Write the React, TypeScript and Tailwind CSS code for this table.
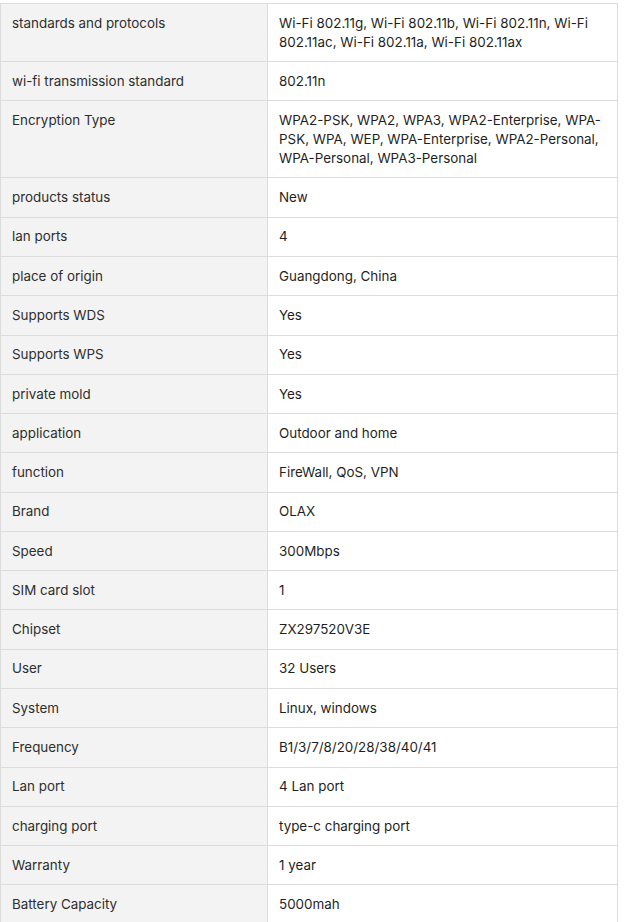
import React from "react";

const rows: [string, string][] = [
  ["standards and protocols", "Wi-Fi 802.11g, Wi-Fi 802.11b, Wi-Fi 802.11n, Wi-Fi 802.11ac, Wi-Fi 802.11a, Wi-Fi 802.11ax"],
  ["wi-fi transmission standard", "802.11n"],
  ["Encryption Type", "WPA2-PSK, WPA2, WPA3, WPA2-Enterprise, WPA-PSK, WPA, WEP, WPA-Enterprise, WPA2-Personal, WPA-Personal, WPA3-Personal"],
  ["products status", "New"],
  ["lan ports", "4"],
  ["place of origin", "Guangdong, China"],
  ["Supports WDS", "Yes"],
  ["Supports WPS", "Yes"],
  ["private mold", "Yes"],
  ["application", "Outdoor and home"],
  ["function", "FireWall, QoS, VPN"],
  ["Brand", "OLAX"],
  ["Speed", "300Mbps"],
  ["SIM card slot", "1"],
  ["Chipset", "ZX297520V3E"],
  ["User", "32 Users"],
  ["System", "Linux, windows"],
  ["Frequency", "B1/3/7/8/20/28/38/40/41"],
  ["Lan port", "4 Lan port"],
  ["charging port", "type-c charging port"],
  ["Warranty", "1 year"],
  ["Battery Capacity", "5000mah"],
];

export default function App() {
  return (
    <div className="bg-white w-[629px] h-[922px] overflow-hidden pt-[3px]" style={{ fontFamily: "Inter, 'Noto Sans', sans-serif" }}>
      <table className="w-[618px] border-collapse text-[13.4px] leading-[18.85px] table-fixed">
        <colgroup>
          <col className="w-[267px]" />
          <col />
        </colgroup>
        <tbody>
          {rows.map(([k, v]) => (
            <tr key={k}>
              <td className="border border-[#dcdcdc] bg-[#f3f3f3] text-[#2e2e2e] align-top pl-[11px] pr-[11px] py-[9.72px]">{k}</td>
              <td className="border border-[#dcdcdc] bg-white text-[#1f1f1f] align-top pl-[11px] pr-[11px] py-[9.72px]">{v}</td>
            </tr>
          ))}
        </tbody>
      </table>
    </div>
  );
}
